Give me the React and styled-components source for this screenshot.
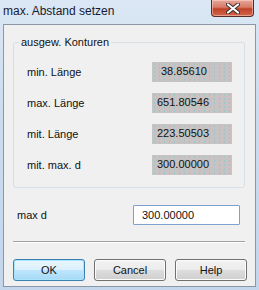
import React from 'react'
import styled, { createGlobalStyle } from 'styled-components'

const GlobalStyle = createGlobalStyle`
  html, body {
    margin: 0;
    padding: 0;
    background: #cfdff0;
  }
  * {
    box-sizing: border-box;
  }
`

const values = [
  { label: 'min. Länge', value: '38.85610', indent: 9 },
  { label: 'max. Länge', value: '651.80546', indent: 5 },
  { label: 'mit. Länge', value: '223.50503', indent: 5 },
  { label: 'mit. max. d', value: '300.00000', indent: 5 },
]

function App() {
  return (
    <>
      <GlobalStyle />
      <Window>
        <TitleBar>
          <Title>max. Abstand setzen</Title>
          <CloseButton aria-label="Schließen">
            <svg width="14" height="11" viewBox="0 0 14 11">
              <path
                d="M2 1.5 L12 9.5 M12 1.5 L2 9.5"
                stroke="#3a2a2a"
                strokeWidth="4"
                strokeLinecap="round"
              />
              <path
                d="M2 1.5 L12 9.5 M12 1.5 L2 9.5"
                stroke="#ffffff"
                strokeWidth="2.2"
                strokeLinecap="round"
              />
            </svg>
          </CloseButton>
        </TitleBar>

        <Client>
          <Group>
            <Legend>ausgew. Konturen</Legend>
            <ValueGrid>
              {values.map(row => (
                <React.Fragment key={row.label}>
                  <Label>{row.label}</Label>
                  <ReadOnlyBox $indent={row.indent}>{row.value}</ReadOnlyBox>
                </React.Fragment>
              ))}
            </ValueGrid>
          </Group>

          <InputRow>
            <Label>max d</Label>
            <TextInput defaultValue="300.00000" />
          </InputRow>

          <Separator />

          <ButtonRow>
            <Button $default>OK</Button>
            <Button>Cancel</Button>
            <Button>Help</Button>
          </ButtonRow>
        </Client>
      </Window>
    </>
  )
}

export default App

const Window = styled.div`
  width: 259px;
  height: 290px;
  display: flex;
  flex-direction: column;
  background: linear-gradient(180deg, #dbe7f4 0%, #cbdcef 40%, #c3d6ec 100%);
  font-family: "Liberation Sans", Arial, sans-serif;
  overflow: hidden;
`

const TitleBar = styled.div`
  height: 24px;
  flex: none;
  display: flex;
  justify-content: space-between;
  align-items: flex-start;
  padding: 0 5px 0 3px;
`

const Title = styled.div`
  font-size: 12px;
  line-height: 14px;
  padding-top: 4px;
  color: #161b33;
`

const CloseButton = styled.div`
  width: 43px;
  height: 17px;
  display: flex;
  align-items: center;
  justify-content: center;
  border: 1px solid #5a2a24;
  border-top: none;
  border-radius: 0 0 4px 4px;
  background: linear-gradient(180deg, #e6a89a 0%, #d77a66 45%, #c0432a 55%, #d3644a 100%);
  box-shadow: inset 0 0 0 1px rgba(255, 220, 210, 0.5);
`

const Client = styled.div`
  flex: 1;
  margin: 0 3px 3px 3px;
  border: 1px solid #8a97a6;
  background: #f0f0f0;
  display: flex;
  flex-direction: column;
  padding: 0 0 0 9px;
`

const Group = styled.fieldset`
  margin: 9px 10px 0 0;
  padding: 12px 12px 12px 13px;
  border: 1px solid #d5dfe5;
  border-radius: 3px;
  min-width: 0;
`

const Legend = styled.legend`
  padding: 0 2px;
  margin-left: -8px;
  font-size: 11px;
  line-height: 16px;
  color: #111;
`

const ValueGrid = styled.div`
  display: grid;
  grid-template-columns: 1fr 80px;
  row-gap: 11px;
  align-items: center;
`

const Label = styled.div`
  font-size: 11px;
  color: #111;
`

const ReadOnlyBox = styled.div`
  height: 20px;
  padding: 2px 0 0 ${p => p.$indent}px;
  font-size: 11px;
  line-height: 14px;
  color: #111;
  background-color: #c8c2c2;
  background-image: radial-gradient(circle, #98c8cc 0.6px, transparent 0.8px);
  background-size: 5px 4px;
`

const InputRow = styled.div`
  display: flex;
  justify-content: space-between;
  align-items: center;
  margin: 17px 15px 0 4px;
`

const TextInput = styled.input`
  width: 107px;
  height: 20px;
  border: 1px solid #7da2ce;
  border-radius: 1px;
  background: #ffffff;
  padding: 0 0 0 8px;
  font-family: "Liberation Sans", Arial, sans-serif;
  font-size: 11px;
  color: #111;
  outline: none;
`

const Separator = styled.div`
  height: 1px;
  margin: 16px 10px 0 0;
  background: #a0a0a0;
  box-shadow: 0 1px 0 #ffffff;
`

const ButtonRow = styled.div`
  display: flex;
  gap: 9px;
  margin-top: 17px;
`

const Button = styled.button`
  width: 72px;
  height: 22px;
  padding: 0;
  font-family: "Liberation Sans", Arial, sans-serif;
  font-size: 11px;
  color: #111;
  border-radius: 3px;
  border: 1px solid ${p => (p.$default ? '#3c7fb1' : '#707070')};
  background: ${p =>
    p.$default
      ? 'linear-gradient(180deg, #eaf6fd 0%, #d9f0fc 50%, #bee6fd 50%, #a7d9f5 100%)'
      : 'linear-gradient(180deg, #f2f2f2 0%, #ebebeb 50%, #dddddd 50%, #cfcfcf 100%)'};
  box-shadow: inset 0 0 0 1px ${p => (p.$default ? '#a8e4fb' : '#fcfcfc')};
`
